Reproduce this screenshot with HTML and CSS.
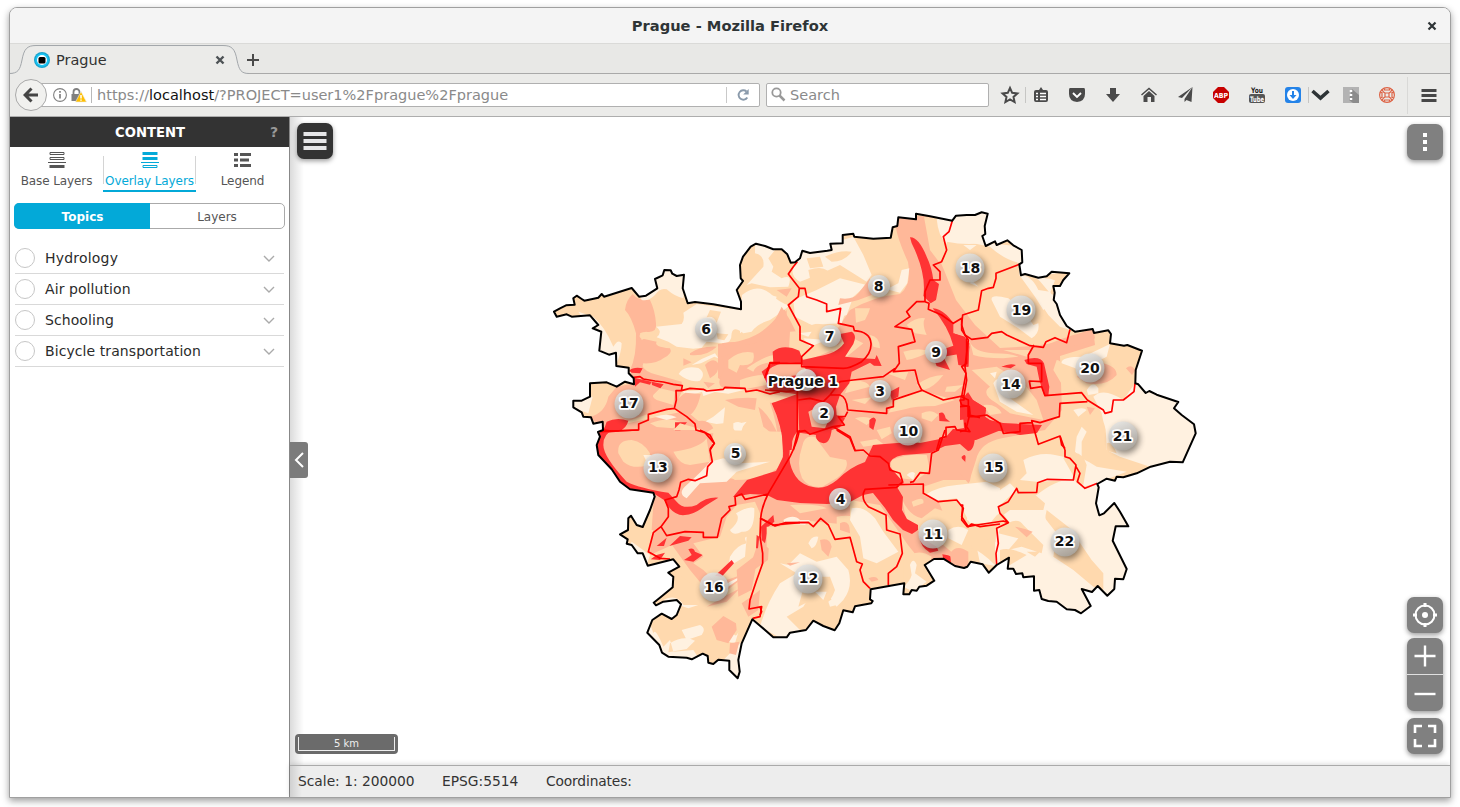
FILE: index.html
```html
<!DOCTYPE html>
<html lang="en">
<head>
<meta charset="utf-8">
<title>Prague</title>
<link rel="stylesheet" href="styles.css">
</head>
<body>
<div class="window">
  <header class="titlebar"><span class="title">Prague - Mozilla Firefox</span>
    <svg class="win-close" width="10" height="10" viewBox="0 0 10 10"><path d="M1.5 1.5L8.5 8.5M8.5 1.5L1.5 8.5" stroke="#2e3436" stroke-width="2.2"/></svg>
  </header>
  <div class="tabs">
    <svg class="tab-shape" width="240" height="31" viewBox="0 0 240 31"><path d="M0 30.500C9 30.500 11 27 13 17C15 7 18 3.500 27 3.500H214C223 3.500 226 7 228 17C230 27 232 30.500 240 30.500V31H0Z" fill="#ebebe9"/><path d="M0 30.500C9 30.500 11 27 13 17C15 6 18 2.500 27 2.500H214C223 2.500 226 6 228 17C230 27 232 30.500 240 30.500" fill="none" stroke="#a3a7ab"/></svg>
    <div class="tab">
      <svg width="16" height="16" viewBox="0 0 16 16"><circle cx="8" cy="8" r="8" fill="#1aa3cc"/><circle cx="8" cy="8" r="6.800" fill="#18c4f5"/><circle cx="8" cy="8" r="5" fill="#fff"/><rect x="4.500" y="5" width="7" height="6.500" rx="1.500"/></svg>
      <span class="tab-title">Prague</span>
      <svg width="10" height="10" viewBox="0 0 10 10"><path d="M1.500 1.500L8.500 8.500M8.500 1.500L1.500 8.500" stroke="#4d5255" stroke-width="2.400"/></svg>
    </div>
    <svg class="plus" width="12" height="12" viewBox="0 0 12 12"><path d="M6 0V12M0 6H12" stroke="#4a4a4a" stroke-width="2"/></svg>
  </div>
  <nav class="toolbar">
    <div class="back"><svg width="16" height="16" viewBox="0 0 16 16"><path d="M8.500 1.500L2 8L8.500 14.500M2.500 8H15" fill="none" stroke="#454545" stroke-width="3"/></svg></div>
    <div class="urlbar">
      <svg width="34" height="16" viewBox="0 0 34 16"><circle cx="7" cy="8" r="6.400" fill="none" stroke="#808080" stroke-width="1.100"/><path d="M7 7V11.500M7 4V5.700" stroke="#777" stroke-width="1.600"/><path d="M20.500 8V5a3 3 0 0 1 6 0v3" fill="none" stroke="#808080" stroke-width="1.800"/><path d="M18.500 7h10v7h-10z" fill="#808080"/><path d="M28 4.500L33.500 15H22.500Z" fill="#ffbf00" stroke="#ebebeb" stroke-width=".6"/><path d="M28 8v3.500M28 12.500v1.300" stroke="#fff" stroke-width="1.500"/></svg>
      <i class="url-sep"></i>
      <span class="url">https://<b>localhost</b>/?PROJECT=user1%2Fprague%2Fprague</span>
      <i class="reload-sep"></i>
      <svg class="reload" width="14" height="14" viewBox="0 0 14 14"><path d="M11.300 9.500A4.700 4.700 0 1 1 10.500 3.500" fill="none" stroke="#8a9aab" stroke-width="1.900"/><path d="M12.700 1V6.500H7.200Z" fill="#8a9aab"/></svg>
    </div>
    <div class="search"><svg width="16" height="16" viewBox="0 0 16 16"><circle cx="5.500" cy="5.500" r="4.200" fill="none" stroke="#999" stroke-width="1.800"/><path d="M8.500 8.500L13.500 13.500" stroke="#999" stroke-width="2.500"/></svg><span>Search</span></div>
    <svg class="tools" width="460" height="42" viewBox="990 74 460 42">
      <path d="M1010 88l2.200 4.800 5.200.6-3.900 3.500 1.100 5.200-4.600-2.600-4.600 2.600 1.100-5.200-3.900-3.500 5.200-.6z" fill="none" stroke="#4a4a4a" stroke-width="2"/>
      <path d="M1025.500 87v16M1308.500 87v16" stroke="#c6c6c4"/><path d="M1407.500 77v37" stroke="#d9d9d7"/>
      <path d="M1036 90h3l2-3 2 3h3q2 0 2 2v8q0 2-2 2h-10q-2 0-2-2v-8q0-2 2-2z" fill="#4a4a4a"/><path d="M1036 93.500h2M1040 93.500h6M1036 96.500h2M1040 96.500h6M1036 99.500h2M1040 99.500h6" stroke="#fff" stroke-width="1.300"/>
      <path d="M1070 88h14q1 0 1 2v4q0 7-8 8-8-1-8-8v-4q0-2 1-2z" fill="#4a4a4a"/><path d="M1073 93l4 4 4-4" fill="none" stroke="#fff" stroke-width="1.900"/>
      <path d="M1110 88h6v6h4l-7 8-7-8h4z" fill="#4a4a4a"/>
      <path d="M1141.500 95l7.500-6.500 7.500 6.500" fill="none" stroke="#4a4a4a" stroke-width="1.500"/><path d="M1143.500 96l5.500-5 5.500 5v6h-3.500v-5h-3.500v5h-4z" fill="#4a4a4a"/>
      <path d="M1192.500 87l-14.500 10 4 1zM1192.500 87l-8 12v3l2-2 5 2z" fill="#4a4a4a"/>
      <path d="M1218 87h6l5 5v6l-5 5h-6l-5-5v-6z" fill="#c70000"/><text x="1221" y="97.500" class="abp" textLength="14" lengthAdjust="spacingAndGlyphs">ABP</text>
      <text x="1257" y="93" class="you" textLength="12" lengthAdjust="spacingAndGlyphs">You</text><rect x="1249" y="94" width="16" height="9" rx="2" fill="#555"/><text x="1257" y="101.500" class="tube" textLength="14" lengthAdjust="spacingAndGlyphs">Tube</text>
      <rect x="1285" y="87" width="16" height="16" rx="3" fill="#2483e8"/><circle cx="1293" cy="95" r="6" fill="#fff"/><path d="M1292 91h2v4h2.500l-3.500 4-3.500-4h2.500z" fill="#2483e8"/>
      <path d="M1312.500 91l8 7 8-7" fill="none" stroke="#2e3436" stroke-width="3.600"/>
      <rect x="1343" y="87" width="16" height="16" fill="#b3b3b3"/><path d="M1352 89l7 6v8h-6l-4-3z" fill="#8c8c8c"/><path d="M1351 90v2M1351 94v2M1351 98v2" stroke="#fff" stroke-width="2.500"/>
      <g fill="none" stroke="#dd6345" stroke-width="1.200"><circle cx="1387" cy="95" r="7.400"/><path d="M1385 93h4v4h-4zM1382 89.500l1.500 2.500 1.500 1M1392 89.500l-1.500 2.500-1.500 1M1382 100.500l1.500-2.500 1.500-1M1392 100.500l-1.500-2.500-1.500-1M1384.500 88.500v1.500h5v-1.500M1384.500 101.500v-1.500h5v1.500M1380.500 92.500h1.500v5h-1.500M1393.500 92.500h-1.500v5h1.500"/></g>
      <path d="M1421.500 90.500h15M1421.500 95.500h15M1421.500 100.500h15" stroke="#474747" stroke-width="2.800"/>
    </svg>
  </nav>
  <main class="app">
    <aside class="sidebar">
      <div class="panel-head"><span>CONTENT</span><em>?</em></div>
      <div class="modes">
        <div class="mode"><svg width="20" height="16" viewBox="0 0 20 16"><path d="M3 .5h14v2H3zM3 5.500h14v2H3z" fill="none" stroke="#555"/><path d="M1 10.500h18" stroke="#555"/><path d="M2.500 13h15v3h-15z" fill="#555"/></svg><span>Base Layers</span></div>
        <div class="mode active"><svg width="20" height="16" viewBox="0 0 20 16"><path d="M2.500 0h15v3h-15zM2.500 5h15v3h-15z" fill="#03a9d8"/><path d="M1 10.500h18M3 13.500h14v2H3z" fill="none" stroke="#03a9d8"/></svg><span>Overlay Layers</span></div>
        <div class="mode"><svg width="20" height="16" viewBox="0 0 20 16"><path d="M1 2.500h4M7 2.500h11M1 8h4M7 8h9M1 13.500h4M7 13.500h11" stroke="#555" stroke-width="3"/></svg><span>Legend</span></div>
      </div>
      <div class="switch"><span class="on">Topics</span><span>Layers</span></div>
      <ul class="topics">
        <li><i></i><span>Hydrology</span><svg width="12" height="7" viewBox="0 0 12 7"><path d="M1 1l5 5 5-5" fill="none" stroke="#aaa" stroke-width="1.400"/></svg></li>
        <li><i></i><span>Air pollution</span><svg width="12" height="7" viewBox="0 0 12 7"><path d="M1 1l5 5 5-5" fill="none" stroke="#aaa" stroke-width="1.400"/></svg></li>
        <li><i></i><span>Schooling</span><svg width="12" height="7" viewBox="0 0 12 7"><path d="M1 1l5 5 5-5" fill="none" stroke="#aaa" stroke-width="1.400"/></svg></li>
        <li><i></i><span>Bicycle transportation</span><svg width="12" height="7" viewBox="0 0 12 7"><path d="M1 1l5 5 5-5" fill="none" stroke="#aaa" stroke-width="1.400"/></svg></li>
      </ul>
    </aside>
    <section class="stage">
      <div class="map">
        <svg class="city" width="1160" height="648" viewBox="290 117 1160 648">
          <defs>
            <path id="border" d="M554 311.700L560 308.300 566 305.300 574.700 304.700 573.300 298.300 576.700 295.700 581.700 299 584.300 300.700 598.300 297.700 601.700 294 604 296.700 631.700 288 639 296.700 646 295.700 657.300 288.300 655 279 662.700 275.300 664.300 270 670.700 270.300 672.300 273.700 676.700 276 684 274.700 682.700 288.300 687.700 303.300 695 302 713.300 304.300 741 309.300 741 301.700 736.700 290 743 281 740.700 278.300 740 265 743 256.700 750.700 246.700 756 243.700 765 246 773.300 249.300 781.700 249.300 787.300 254.300 790.700 262.700 795 262.300 800 258.300 802.300 250.700 810 253 827.300 250.700 831.700 250 830.300 243.700 842.700 243.300 842.700 235 853.300 233.700 854.300 236.700 873.300 238.700 890.700 237.700 892.700 227.300 897.300 226 898.300 217.300 916 219.300 916 213.700 930 216.300 952.300 220.700 956 215.700 966.700 215 975 215 981.700 212.300 987.700 213.700 984.700 226 985.300 234 982.300 236 985.700 246 995 241.300 996.700 245 1007.300 240.300 1013.300 245.300 1021.700 250 1022.300 262.300 1019.300 264.300 1021 275.300 1025 274 1038.300 277.700 1046.700 276.300 1051.700 271.700 1069.300 273.300 1063.300 280 1060 286 1053.300 286 1054.700 292.700 1053.700 300 1056.700 304 1060 315 1066.700 326 1075 331.700 1092.700 329 1094 333 1108.300 330.300 1111 334 1110 343.300 1124 345.700 1127.300 345 1142 350.700 1135.700 370 1135.300 383.300 1138.300 384.300 1145.700 393 1149.300 391 1156.700 394.700 1178.300 402 1174 408.300 1181.700 415 1194 424.300 1195.700 433.300 1182.700 462.300 1170 461.700 1150.700 466.700 1136.700 473.300 1123.300 477.300 1116.700 476.700 1115 480.700 1106.700 478.700 1097.300 484 1098.700 487.300 1096 503.300 1099.300 515.300 1104 513.300 1114.300 503 1120 511.700 1128.300 526.300 1115.700 526.300 1112.700 540.700 1126.700 569 1123.300 579.300 1115 578.700 1114.300 589 1107.300 595.700 1097.700 586 1092 592 1081.700 589 1090.700 606 1081 613.300 1075 610 1066.700 609.300 1056.700 601.700 1048.300 601 1041.700 599 1039.300 590 1034 590.700 1034 576.300 1023.300 577.300 1022.300 573.300 1016 574 1013.300 568.700 1007.700 568.700 1009 557.700 996.700 565 988.700 572.700 982.700 564.300 970.700 561.700 967.300 566.700 964 568 955 566 943.300 558.700 934 559 924.700 565 934.300 580.700 926.700 585.700 919.300 586.700 916.700 590.700 911.700 590 909.300 594.300 903.300 594.300 904.300 583.300 870.700 589.300 870 599.300 872.700 601 871.300 603.300 855 606.300 852.700 612.300 843.300 610.300 839.300 623.300 834.700 630.300 823.300 626 813.300 620.700 806 630 790 632.700 786.700 637.300 773.300 637.300 760 625.700 752.300 619.300 741.700 643.300 738.300 660 739.700 671.700 737.700 678.300 729.300 670 729.300 660.700 718.300 659.700 713.300 664 708.300 662.700 707.700 656 702.700 653.700 691.700 659.300 686.700 657.700 668.300 656.700 662 652.700 659.300 645 647.300 632.700 652.300 620 661.700 613.700 671.700 619 676.700 615 681 604.300 676.700 600 663.300 601.700 656 605.300 653.700 602.700 663.300 595 672.700 587.300 673.300 576.700 668.300 572.700 679.300 566.700 673.300 559.300 647.700 565.700 642.700 553.300 637.700 553.300 631.700 545 626.700 543.700 627.700 539.300 620 534.300 628 530 628.300 518.300 631 515.700 636.700 525 642.700 527 650 510 654.700 496.700 653.300 492.700 630 489.300 620 481.700 611.700 469.300 598.300 455 596.700 445 600 436.700 598 432 603 430 602.700 421.700 593.300 423.700 591 417.300 583.300 416.700 581.700 412.300 573.300 407.300 573.300 400.700 581.700 400.700 590 396.700 590 383.300 606.700 382.300 616.700 386.700 625 381.700 634 384.300 633.700 378.300 628.700 373.300 628.700 367.700 616.300 366 616 352.700 609 354.700 599.300 350.700 601.300 331.700 592.700 328.300 598.300 325 590 315.300 571.700 316.700 566.700 314.300 556.700 316.700Z"/>
            <clipPath id="inside"><use href="#border"/></clipPath>
            <linearGradient id="ball" x1=".2" y1="0" x2=".6" y2="1"><stop offset="0" stop-color="#e6e6e4"/><stop offset=".55" stop-color="#bfbdba"/><stop offset="1" stop-color="#a09c96"/></linearGradient>
          </defs>
          <g clip-path="url(#inside)">
            <path class="o" d="M540 200H1210V690H540Z"/>
            <path class="s" d="M718 344Q750 342 766 328Q778 318 784 306L790 330 802 350 830 340 850 310Q875 296 900 294Q912 285 908 262Q898 240 896 228L900 216 932 216Q930 240 944 270L956 300 975 325 1000 348 1034 346 1060 342 1093 328 1095 345 1060 356 1062 410 1045 430 1003 438Q980 442 976 460L968 485 950 490 938 500 950 530 966 550 968 570 946 560 924 565 908 545 880 505 850 500 850 525 800 520 770 530 768 560 740 580 715 600 690 570 672 545 650 555 654 494 600 465 596 430 690 410 800 400 730 385 718 378Z"/>
            <path class="o" d="M690 392Q730 388 766 394Q774 410 778 436Q786 452 780 466Q765 480 735 480L712 466 712 440 702 424 690 414Z"/>
            <!-- north-west -->
            <g transform="translate(540 200) scale(.33333)">
              <path class="s" d="M255 330Q258 300 278 282Q292 302 330 300Q345 330 348 370Q352 400 318 395Q290 402 302 415L350 425Q340 440 390 445Q400 460 370 475Q350 492 310 490Q300 505 335 520L425 545 425 575 405 620 330 640 190 690 150 650Q195 640 205 590L230 560 283 550 270 510Q290 470 288 400Q275 350 255 330Z"/>
              <path class="c" d="M352 265L340 235 375 205 435 220 430 295Q405 290 380 268Q360 262 345 285Q325 305 305 300L300 288Z"/>
              <path class="c" d="M348 380L425 372Q435 360 430 338L470 312 603 330 606 285Q650 248 690 280Q720 310 745 315Q760 312 690 360Q650 372 635 395L610 400Q580 375 575 400Q575 430 552 430L500 425 485 443 460 446 410 440 385 425 350 412Q370 395 348 380Z"/>
              <path class="o" d="M510 330L543 335 530 368Q520 345 500 352ZM530 400l35 3-12 18-20-4z"/>
              <path class="c" d="M115 335L160 350Q195 380 220 440 235 415 245 430 245 460 225 500L200 470 165 452 165 400 150 385Z"/>
              <path class="s" d="M545 430Q600 420 620 435L680 420Q700 370 740 330V582L650 568 560 566Q525 560 545 525Q560 500 545 470L580 460 560 445Z"/>
              <path class="o" d="M565 480Q600 450 640 458Q650 500 600 495L590 518 565 505ZM620 505Q700 450 720 470V486Q650 485 640 515ZM600 540h80q20 12-30 18z"/>
              <path class="s" d="M495 495Q520 470 535 490 540 520 510 535ZM450 460Q480 438 530 440 500 470 450 465ZM430 475l25 12-25 10zM490 545l35 5-20 14z"/>
              <path class="c" d="M416 522Q430 495 475 504 500 520 480 542 450 550 416 522ZM455 495l30-18 40-17 10 15-12-5-40 20zM430 574l80-5-55 15-18 20zM485 572l70-5 60 2-50 12-40-5-35 12zM495 665l25-15 35-28-5 48-20 2zM580 670q20-10 30 5l-12 40q-8-10-18-30z"/>
              <path class="o" d="M155 560L225 552Q195 590 180 610 165 640 150 650L95 620ZM360 565L405 575 400 615 350 600Q330 590 345 580ZM300 400q20-10 25 10l-20 10zM330 670q50-20 90-5l-20 20-50-4zM220 735q60-35 100 0l-20 20h-90z"/>
              <path class="c" d="M95 590L158 590 145 640 100 625ZM345 650q40-12 65 2l-30 8z"/>
              <path class="s" d="M410 600L435 578 482 582Q470 640 440 650L405 625ZM470 665q35-10 50 20l-25 15zM555 600q60-10 95-5l-5 35-50-10zM655 620q40 30 65 100l-50-40z"/>
              <path class="r" d="M268 512Q280 500 308 505L300 520 275 518ZM282 533L335 545 330 554 300 547 285 560ZM335 545l36 8-10 12-25-10zM188 700L200 665Q230 650 265 662 260 685 235 695ZM405 667l36 0-20 24h-16z"/>
            </g>
            <!-- north -->
            <g transform="translate(740 200) scale(.33333)">
              <path class="c" d="M45 130L105 150 85 175 100 200 95 215 125 235Q160 220 145 260L90 262 35 250 20 255 70 200Q75 165 45 160ZM0 300Q60 270 110 290L100 320 0 400ZM190 150L260 155 275 130 340 110 370 165 395 225 380 245 300 195 245 220 180 245Q150 230 160 200ZM160 300L230 270 300 235 380 255 340 290 320 345 215 375 165 350ZM440 268L475 250 485 210 508 205 502 250 480 278Z"/>
              <path class="o" d="M200 175l40-5 10 30-40 5zM205 210q60-20 70 25l-60 25zM255 170q40-20 80-15-20 30-60 30zM180 370q70 15 100-5l-15 50-70 40-25-30z"/>
              <path class="s" d="M300 295q40 5 55-15l35-45 5 50-40 15-60 15zM125 320l25 40 30 60V450H60zM110 270l45-5-15 25z"/>
              <path class="o" d="M150 395l65-5q50 15 75 5l0 50-70 30-75 5zM345 325L390 325 385 340 375 360 348 368zM390 405q30 5 30 40l-20-5zM270 450l60-40 40 20-50 40zM260 430q50 10 65 30z"/>
              <path class="c" d="M235 300q25 30 80 40l-10 30q-60 5-100 0l15-30-30-5zM175 400l40-5-10 15zM190 415l70 5-50 20z"/>
              <path class="o" d="M552 50L600 56 600 130 620 150 600 190 570 150Z"/>
              <path class="c" d="M590 56h50l-20 75q-25-20-30-75z"/>
              <path class="c" d="M635 60L650 45H720V130Q670 135 620 125Z"/>
              <path class="o" d="M500 375q30-25 55-20-10 15 5 50l-35-5zM490 455q50-15 80 0-40 20-70 25zM440 520l65-5-10 25zM530 555q40-30 80-30-30 40-60 45zM620 560l50-5-25 20-30 0zM465 600q40-25 90-25l90 25-60 18q-60 0-90 10l-50 10zM330 540q50 0 60 20l-75 20zM335 600l60-8-20 20zM545 640q30-15 50 5l-20 20-30-10zM345 655q35-10 55 5l-20 15zM410 690l40-10 5 20-30 18zM70 525q-30 0-70 15v30l80-15zM360 725l50-8 20 15-60 8z"/>
              <path class="c" d="M505 720q30-5 40-18l-5 25zM0 670l20-5-20 25z"/>
              <path class="r" d="M98 455Q130 430 178 452L188 480 230 470Q290 462 312 430L300 402 335 395Q352 405 340 432L315 470 365 475 405 477 410 465 425 498 402 497 390 488 335 515 328 550 300 585 288 620 290 645 315 655 300 682 275 690Q270 730 250 730 225 725 228 705L178 698 174 600 162 650 155 750 130 750Q128 680 95 610L170 583 90 570 65 515 100 488Z"/>
              <path class="s" d="M85 510Q120 480 185 492L200 510 180 525 85 535ZM205 635q45-25 65 15l-15 35-40-5z"/>
              <path class="r" d="M510 112Q535 110 560 170 575 200 580 240L597 252 588 300 572 310 550 288Q560 220 515 130ZM578 325Q620 328 655 395L688 430 685 500 665 500 658 462 610 470 630 510 590 498 575 460 640 437Q625 380 578 325ZM450 575L478 560 475 590 455 600ZM388 660q15-15 20 0l-8 30-12-8zM597 640q15-10 20 15l13 10-32-2z"/>
            </g>
            <!-- north-east and east -->
            <g transform="translate(960 200) scale(.33333)">
              <path class="c" d="M-15 30H90V130L187 140V190Q140 185 90 140L40 130-10 128ZM178 190L240 220 295 215 270 280 245 250Q230 225 178 225ZM235 275L285 285 330 390 300 380 265 345 235 300ZM95 300Q90 280 145 295L190 330 220 375 235 370Q240 400 215 415L175 385 120 350Z"/>
              <path class="c" d="M178 225Q215 225 235 270L270 275 285 300 250 330 225 290ZM305 490Q300 470 370 470L450 432 440 470 360 510ZM380 570q20-30 35-5l0 15-30 5zM400 590Q430 560 490 600L525 550 560 575 720 600V760H520Q440 740 425 640Z"/>
              <path class="o" d="M255 225L325 215 300 258Q290 235 255 235ZM30 425q10 30 70 35 50 0 75 10l-45 5q-60 0-90-10zM35 510l75-10 80 50 40 50 20 60-100-20-40-30q-50-30-20-50zM130 450l80 0-10 20zM290 480q15 0 15 20l15 30 80 10-20 30-70-10-30-50z"/>
              <path class="s" d="M225 455Q260 430 340 405L400 390 405 415Q360 440 320 440 240 465 225 455ZM430 490Q470 500 470 525 440 560 380 550L350 530ZM498 505q15-15 28 5l-10 15zM-20 400L30 418 20 400-20 320ZM380 620l25 5-15 20z"/>
              <path class="c" d="M100 550q10-20 25-10l25 55 70 50-50-10-50-30zM30 250l25 10-20-20zM10 135l40 0-20 15zM90 520l20-5-5 20z"/>
              <path class="o" d="M70 615q40-5 55 25l-35 5z"/>
              <path class="r" d="M193 480Q240 465 252 490L268 560 265 588 253 588 238 540 230 500 200 492ZM124 500Q150 488 168 495L152 505ZM0 590L30 595 78 625 70 650 0 660ZM-20 400L15 410 28 440 25 500-5 495Z"/>
            </g>
            <!-- west and south-west -->
            <g transform="translate(560 430) scale(.33333)">
              <path class="s" d="M130 10H460L440 135 360 160 340 200 200 160 130 70Z"/>
              <path class="o" d="M175 70Q170 30 215 30 250 35 270 70L265 105Q220 120 190 95ZM340 65q80-10 100-40l10 70-60 10q-30 0-50-40zM480 0L665 5Q670 90 660 95 600 150 500 145L430 135 490 60 470 30ZM360 -20L430 0H340Z"/>
              <path class="c" d="M380 165Q430 120 450 95L490 85 540 100 630 95 530 125 500 155 420 160 380 205Q350 190 380 165ZM250 75l25 0-15 20z"/>
              <path class="o" d="M500 260L530 225 585 215 600 250 600 320 580 380 560 430 470 460 430 420 400 400 430 380 400 340 480 320ZM340 420L430 490 560 470 540 560 570 560V780H240V560L340 460ZM240 300l40 0-20 80-50-30-30-30 40-70z"/>
              <path class="c" d="M528 250Q570 225 583 235 585 310 545 305 520 320 510 300 545 270 528 250ZM510 380q20-35 50-40-10-20 0-20l-5 60-50 30zM310 650q-25-60-30-40L270 580 240 620 310 690H420L400 660 340 665 330 630zM330 640q40-25 75-8l-25 25-55 10zM365 600L420 585Q440 595 425 615L380 630ZM310 510q40-20 60 15l45 0-30 10-30-10zM430 480h40l40-25 60-30-80 55zM490 690L550 630 560 680 530 760ZM520 610q10 20 20-20l-15 50-20-5zM215 335l55 40-10 30-50-60z"/>
              <path class="s" d="M455 590L490 558 528 580 530 600 505 640 470 630ZM510 640l28-5-10 40-20-5zM545 520q30-20 55-40l-5 60-30 20zM440 530q50-30 100-55l-40 40zM530 420l65-50-20 110-40 20z"/>
              <path class="r" d="M122 -10L108 50Q130 130 210 180L280 190 312 210Q340 260 375 255 400 255 435 228L475 203Q440 200 410 225 370 240 350 215L325 188Q240 175 200 155 130 80 130 45 130 10 160 0ZM328 348L360 318 395 322 385 332ZM385 358Q400 350 405 365L428 375 400 395 372 390 395 375ZM272 388L290 375 315 368 300 390ZM290 348l30-25-8 25zM465 437L515 390 522 400 485 440ZM603 290L640 255 643 275 625 290 615 340 605 330ZM590 315l8 5-4 35-6 0z"/>
            </g>
            <!-- south -->
            <g transform="translate(760 430) scale(.33333)">
              <path class="o" d="M20 290L150 290 180 320 260 330 290 400 330 470 250 560 130 620 30 610 20 400Q50 370 20 350ZM90 225q80-5 110 10l-80 15zM230 260q60-10 90 20l60 60 40 40-40 90-80-30-20-110-50 20z"/>
              <path class="c" d="M120 370L170 395 230 380 265 420Q280 470 250 510L230 530 200 490 160 480 130 530 80 560 120 600 80 635 0 590Q20 520 60 460L110 430 60 400 85 405ZM275 235Q310 225 345 265L370 305 415 365 350 400 310 385 300 320 270 270ZM70 270q30-20 50 0l30 0-15 15-60-5zM145 340q10-25 30-20-5 30-20 35z"/>
              <path class="o" d="M140 440h70l15 40q-20 60-50 20l-60 30z"/>
              <path class="c" d="M165 485l35 0-10 25zM205 515q15-15 25 10l-20 5z"/>
              <path class="s" d="M180 330q30-10 35 20l-10 30-20-20zM80 400l40-3-30 10zM325 445q25-10 30 5l-20 5zM240 280q30-15 30 30l-30-10z"/>
              <path class="o" d="M395 90Q440 70 500 75L510 120 470 150 420 145Q385 120 395 90ZM455 215q40-20 35 5l-30 10zM425 205q20 50 60 60l40-30 60 20 50 40 0 70-50 10-70-60-70-20zM430 390q40-40 85-10l-15 70-70 30zM665 75l55-30v255l-90-20-20-60-80-5-40-20 0-25 60-20 80 0z"/>
              <path class="c" d="M495 195Q530 170 590 165L680 155 720 175 715 250 690 280 630 280 590 205 530 212ZM440 135q15-15 25-5l-5 20zM565 300q30-20 60 0l-20 45-40-20zM450 405q10-25 20 0l-5 25 35 25-40 30-30-15q20-15 25-35zM650 350q60-30 70 0v60l-60-10z"/>
              <path class="r" d="M478 318L530 350 535 362 510 368Q480 350 478 318ZM547 373Q580 375 620 412L585 415 550 388ZM605 80q10-10 12 0l-2 25-10-5z"/>
            </g>
            <!-- south-east -->
            <g transform="translate(960 400) scale(.33333)">
              <path class="c" d="M190 180Q240 155 285 165L310 170 345 205 340 240 230 245 180 240 200 220ZM45 300q40-15 75-30l30-20 20 20-50 70-60 30-40-10zM430 20Q440 110 440 150L480 170 570 200 720 180V0H440ZM340 30q30-10 40 0l-25 20zM350 110l15-30 15 15-15 30 0 50-20-20z"/>
              <path class="c" d="M115 320L230 285Q300 230 345 240L350 250 375 265 420 240 520 380 510 650H90L110 380 150 370ZM310 170Q350 160 410 200L500 215 410 250 370 260Z"/>
              <path class="o" d="M115 320L170 270 220 280 255 310 250 330 150 330 130 345ZM260 330L330 385 395 480 430 520V570L400 560 340 510 280 470 290 400 255 355ZM120 385q50-40 70-10l60 60-5 25-60-20-40 10 30-35-60-15zM310 175q50-40 70 20l-10 60-20-10zM120 450q30-10 80 15l-50 30-30-10zM440 130q15-10 30 30l-30-8zM200 455l40 0-15 15zM35 435q40-20 70-20v80q-40-40-70-50z"/>
              <path class="s" d="M165 380Q190 385 218 395L200 412ZM-30 460q20-30 55-5v50h-50zM0 170l20 20q20 50 5 60L0 220Z"/>
              <path class="c" d="M200 350l20-5-8 20zM235 340l20 5 5 30-25-10zM160 350l35-5-10 20z"/>
            </g>
            <path class="r" d="M772 403Q784 425 783 457L776 471 747 480 733 497 750 494 767 495 777 500 800 503 827 504 850 502 863 495 873 493 885 508 893 520 903 530 912 534 918 530 918 525 907 519 902 510 903 497 897 487 904 483 890 467Q888 458 903 455L930 453 945 446 960 444 968 451Q974 451 975 437 980 428 1000 431L1020 435 1037 433 1042 425 1003 423 985 419 986 410 970 400 967 393 962 400 969 413 970 430 953 429 945 438 920 443 897 443 873 445 865 462Q850 467 837 480 825 490 813 487 795 484 790 463 787 445 798 430V400Z"/>
            <path class="r" d="M962 402L968 392 973 400 986 408 984 416 993 422 1006 428 976 440 952 440 952 430 964 428Z"/>
            <path class="o" d="M802 447Q804 434 815 437L830 457 846 460Q850 468 837 478L822 487Q808 488 802 478 796 464 802 447Z"/>
          </g>
          <g class="roads">
            <g transform="translate(540 200) scale(.33333)">
              <path d="M281 532L300 530 310 537 345 543 370 546 400 553 427 557 424 572 450 565 490 568 500 573 550 568 555 562 615 565 618 575 650 570 690 582 720 575M424 572L408 572 409 600 403 625 380 628 325 643 325 660 296 672 296 690 215 693 190 690M403 625L440 650 465 672 468 690 495 698 523 730 510 747M720 488H690L685 510 675 530"/>
            </g>
            <g transform="translate(740 200) scale(.33333)">
              <path d="M172 185L160 200 145 222 178 265 195 265 200 290 230 300 260 312 260 335 302 325 295 370 340 380 343 392Q390 395 393 430 395 460 365 485 330 505 310 505L185 500 185 470 220 437 180 420 180 380 145 315 175 290 178 265M185 490H90L82 510 75 535M75 570L140 575 172 570V700L160 750M175 600L210 595 250 605 270 585 300 585Q320 590 323 630L440 640 440 625 460 620 460 600 490 590 550 570M323 635L315 650 295 650 313 675 280 680 210 703 195 692 175 695M280 680L330 710 345 750M270 585L300 545 340 540 430 530 465 505M637 62L627 95 610 110 620 150 605 185 580 195 600 215 600 240 570 240 555 275 555 305 530 305 500 335 510 350 465 380 515 388 525 425 475 440 478 490 460 515 525 510 535 550 545 570 610 600 672 587M555 305L567 310 565 328 605 345 640 370 665 355 665 390 685 420 675 500 680 540 672 587 672 600 660 600 665 615 688 620 690 640 680 680 690 695 650 690 645 680 618 682 618 710 600 715 590 750M688 645L720 653"/>
            </g>
            <g transform="translate(960 200) scale(.33333)">
              <path d="M178 193L108 220 108 235 100 262 85 265 65 272 55 330 8 345 5 375 15 405 35 418 83 412 95 400 125 395 140 405 210 437 250 442 258 425 285 413 320 428 330 388M222 435L205 465 205 490 245 490 245 545 208 543 212 565 245 560 255 587 365 578 382 600 430 630 435 640 455 635 460 600 490 600 522 575 525 550M382 605L300 610 298 650 240 668 215 662 235 733 300 708 305 735 315 745M20 415L20 490 5 500 18 520 5 590 25 600 25 650 45 650 80 645 120 670 130 700 180 695 180 670 215 668"/>
            </g>
            <g transform="translate(560 430) scale(.33333)">
              <path d="M420 0L450 15 463 40 450 60 457 95 443 110 440 137 405 152 385 148 362 157 357 180 350 200 315 210 325 235 325 260 303 290 320 317 375 305 430 307 430 322 472 322 485 265 510 240 507 230 527 225 525 200 545 192 555 208 625 192M303 290L280 308 265 365 300 385 330 387M718 0Q715 30 690 80L625 190Q605 230 602 265L600 320 608 370 608 400 590 450 570 510 567 537 605 530 600 560 578 565M602 265L640 285 720 278M122 5L235 0"/>
            </g>
            <g transform="translate(760 430) scale(.33333)">
              <path d="M0 265L45 288 75 278 145 277 160 290 182 265 205 285 225 328 270 322 275 340 290 395 307 402 300 420 310 455 330 475M230 0L270 25 285 62 310 60 330 78 360 80 385 100 390 120 420 130 428 155 410 172 315 178Q300 205 325 230L378 255 380 300 420 312 427 370 410 410 385 430 385 465M385 165L490 162 490 190 535 215 590 210 610 235 605 260 625 290 635 282 660 290 720 282M450 157L460 155 480 128 508 130 515 70 535 60 555 0M0 530L5 545 0 555"/>
            </g>
            <g transform="translate(960 400) scale(.33333)">
              <path d="M315 150V170L330 175 348 195 340 240 262 238 233 248 230 277 175 278 170 265 145 305 115 320 120 340 145 368 110 385 115 430 108 460 110 495M348 200L360 220 352 245 375 265 412 250M145 368L130 363 50 375 22 380 5 360 8 315 0 315M300 108L315 150M0 20L25 18 25 50M0 95L18 90 15 68"/>
            </g>
          </g>
          <use href="#border" class="outline"/>
          <ellipse cx="800" cy="387" rx="36" ry="7" class="smudge"/>
          <g class="pins"><circle cx="706" cy="329" r="11"/><circle cx="879" cy="286" r="11"/><circle cx="830" cy="336" r="11"/><circle cx="936" cy="352" r="11"/><circle cx="880" cy="391" r="11"/><circle cx="823" cy="413" r="11"/><circle cx="735" cy="454" r="11"/><circle cx="840" cy="499" r="11"/><circle cx="806" cy="380" r="11"/><circle cx="970" cy="268" r="14.500"/><circle cx="1021" cy="310" r="14.500"/><circle cx="1090" cy="368" r="14.500"/><circle cx="1011" cy="384" r="14.500"/><circle cx="629" cy="404" r="14.500"/><circle cx="908" cy="431" r="14.500"/><circle cx="1123" cy="436" r="14.500"/><circle cx="658" cy="468" r="14.500"/><circle cx="993" cy="468" r="14.500"/><circle cx="933" cy="534" r="14.500"/><circle cx="1065" cy="542" r="14.500"/><circle cx="714" cy="587" r="14.500"/><circle cx="808" cy="579" r="14.500"/></g>
          <g class="labels"><text x="706" y="333.500">6</text><text x="878.500" y="290.500">8</text><text x="829.500" y="340.500">7</text><text x="936" y="356.500">9</text><text x="880" y="396">3</text><text x="824" y="417.500">2</text><text x="735.500" y="458">5</text><text x="840.500" y="504">4</text><text x="803" y="385.500">Prague 1</text><text x="970.500" y="272.500">18</text><text x="1021.500" y="314.500">19</text><text x="1090" y="372.500">20</text><text x="1011" y="389">14</text><text x="629" y="408">17</text><text x="908.500" y="435.500">10</text><text x="1122.500" y="441">21</text><text x="658" y="472">13</text><text x="994" y="472">15</text><text x="933.500" y="538.500">11</text><text x="1064.500" y="546">22</text><text x="714" y="591.500">16</text><text x="808.500" y="583">12</text></g>
        </svg>
        <div class="btn menu"><svg width="24" height="20" viewBox="0 0 24 20"><path d="M.5 3h23M.5 10h23M.5 17h23" stroke="#e6e6e8" stroke-width="4"/></svg></div>
        <div class="collapse"><svg width="10" height="16" viewBox="0 0 10 16"><path d="M9 1L2 8l7 7" fill="none" stroke="#fff" stroke-width="2"/></svg></div>
        <div class="btn more"><svg width="4" height="18" viewBox="0 0 4 18"><path d="M0 0h4v4H0zM0 7h4v4H0zM0 14h4v4H0z" fill="#fff"/></svg></div>
        <div class="controls">
          <div class="btn"><svg width="24" height="24" viewBox="0 0 24 24"><circle cx="12" cy="12" r="9.500" fill="none" stroke="#fff" stroke-width="2"/><circle cx="12" cy="12" r="3" fill="#fff"/><path d="M12 0v4M12 20v4M0 12h4M20 12h4" stroke="#fff" stroke-width="3"/></svg></div>
          <div class="zoom"><div><svg width="22" height="22" viewBox="0 0 22 22"><path d="M11 .5v21M.5 11h21" stroke="#fff" stroke-width="2.400"/></svg></div><div><svg width="22" height="22" viewBox="0 0 22 22"><path d="M.5 11h21" stroke="#fff" stroke-width="2.400"/></svg></div></div>
          <div class="btn"><svg width="24" height="24" viewBox="0 0 24 24"><path d="M9 2H2V9M15 2h7V9M9 22H2V15M15 22h7V15" fill="none" stroke="#fff" stroke-width="2.600"/></svg></div>
        </div>
        <div class="scale"><span>5 km</span></div>
      </div>
      <footer class="status"><span class="s1">Scale: 1: 200000</span><span class="s2">EPSG:5514</span><span class="s3">Coordinates:</span></footer>
    </section>
  </main>
</div>
</body>
</html>
```
FILE: styles.css
```css
* { box-sizing: border-box; }
body { margin: 0; width: 1460px; height: 807px; overflow: hidden; background: #fff; font-family: "DejaVu Sans", sans-serif; color: #333; }
svg { display: block; flex: none; }
.window { width: 1442px; height: 791px; margin: 7px 9px; border: 1px solid #a0a0a0; border-radius: 8px 8px 0 0; box-shadow: 0 3px 7px rgba(0,0,0,.38); overflow: hidden; display: flex; flex-direction: column; background: #fff; }
.titlebar { height: 36px; background: #f4f4f4; border-bottom: 1px solid #dadad8; position: relative; display: flex; align-items: center; justify-content: center; font-weight: bold; font-size: 14.67px; color: #2e3436; }
.win-close { position: absolute; right: 13px; top: 13px; }
.tabs { height: 30px; background: #e8e8e6; border-bottom: 1px solid #a9a9a9; position: relative; display: flex; align-items: center; }
.tab-shape { position: absolute; left: -1px; top: -1px; }
.tab { position: relative; display: flex; align-items: center; width: 191px; margin-left: 24px; margin-top: 3px; font-size: 14.5px; }
.tab-title { flex: 1; margin-left: 6px; line-height: 17px; }
.plus { margin-left: 22px; margin-top: 3px; }
.toolbar { height: 43px; background: #ebebe9; border-bottom: 1px solid #adadad; display: flex; align-items: center; flex: none; font-size: 14.53px; color: #8a8a8a; }
.back { position: relative; z-index: 2; margin-left: 5px; width: 32px; height: 32px; border: 1px solid #a9a9a9; border-radius: 50%; background: #f1f1ef; display: flex; align-items: center; justify-content: center; flex: none; }
.urlbar { margin-left: -7px; padding-left: 12px; width: 720px; height: 24px; background: #fff; border: 1px solid #b0b0b0; border-radius: 2px; display: flex; align-items: center; flex: none; }
.url-sep { width: 1px; height: 16px; background: #b9b9b9; margin: 0 5px 0 4px; }
.url { flex: 1; white-space: nowrap; line-height: 16px; }
.url b { font-weight: normal; color: #111; }
.reload-sep { width: 1px; height: 16px; background: #c9c9c9; }
.reload { margin: 0 9px; }
.search { width: 223px; height: 24px; margin-left: 6px; background: #fff; border: 1px solid #b0b0b0; border-radius: 2px; display: flex; align-items: center; padding-left: 4px; gap: 3px; flex: none; }
.search span { line-height: 16px; }
.tools { margin-left: 1px; }
.abp { font: bold 7px "DejaVu Sans", sans-serif; fill: #fff; text-anchor: middle; }
.you { font: bold 7.5px "DejaVu Sans", sans-serif; fill: #222; text-anchor: middle; }
.tube { font: bold 7.5px "DejaVu Sans", sans-serif; fill: #fff; text-anchor: middle; }
.app { flex: 1; display: flex; min-height: 0; }
.sidebar { width: 280px; border-right: 1px solid #888; background: #fff; flex: none; }
.panel-head { height: 30px; background: #333; color: #fff; font-weight: bold; font-size: 13.2px; display: flex; align-items: center; position: relative; }
.panel-head span { flex: 1; text-align: center; padding-left: 1px; }
.panel-head em { position: absolute; right: 11px; font-style: normal; color: #999; font-size: 14px; }
.modes { display: flex; height: 45px; }
.mode { width: 93px; display: flex; flex-direction: column; align-items: center; padding-top: 5px; font-size: 12px; color: #555; position: relative; white-space: nowrap; }
.mode span { margin-top: 6px; line-height: 15px; letter-spacing: -.1px; }
.mode.active { color: #03a9d8; border-bottom: 2px solid #03a9d8; background: linear-gradient(#d4d4d4,#d4d4d4) right 9px/1px 28px no-repeat, linear-gradient(#d4d4d4,#d4d4d4) left 9px/1px 28px no-repeat; }
.switch { margin: 11px 4px 0; height: 26px; border: 1px solid #aaa; border-radius: 5px; display: flex; font-size: 12px; line-height: 26px; text-align: center; color: #555; }
.switch span { flex: 1; }
.switch .on { background: #03a9d8; color: #fff; font-weight: bold; margin: -1px 0 -1px -1px; line-height: 28px; height: 26px; border-radius: 5px 0 0 5px; padding-left: 1px; flex: 0 0 136px; }
.topics { list-style: none; margin: 14px 5px 0; padding: 0; font-size: 14px; color: #2b2b2b; }
.topics li { height: 31px; border-bottom: 1px solid #d9d9d9; display: flex; align-items: center; letter-spacing: .08px; }
.topics i { width: 20px; height: 20px; border: 1px solid #c6c6c6; border-radius: 50%; margin-right: 10px; }
.topics span { flex: 1; }
.topics li:first-child span { letter-spacing: .2px; }
.topics svg { margin-right: 9px; }
.stage { flex: 1; display: flex; flex-direction: column; min-width: 0; }
.map { flex: 1; position: relative; background: linear-gradient(90deg, rgba(0,0,0,.14), rgba(0,0,0,0) 14px), #fff; }
.city { position: absolute; left: 0; top: 0; }
.c { fill: #fff1e0; } .o { fill: #ffd9ae; } .s { fill: #ffb899; } .r { fill: #ff3334; }
.outline { fill: none; stroke: #000; stroke-width: 2; stroke-linejoin: round; }
.roads { fill: none; stroke: #f00; stroke-width: 5; stroke-linejoin: round; }
.pins circle { fill: url(#ball); filter: drop-shadow(2px 3px 3px rgba(0,0,0,.5)); opacity: .9; }
.smudge { fill: rgba(50,20,10,.65); filter: blur(4px); }
.labels { font: bold 14px "DejaVu Sans", sans-serif; fill: #111; stroke: #fff; stroke-width: 3.6px; paint-order: stroke; stroke-linejoin: round; text-anchor: middle; }
.btn { width: 36px; height: 36px; border-radius: 7px; background: #808080; display: flex; align-items: center; justify-content: center; box-shadow: 0 2px 5px rgba(0,0,0,.4); }
.menu { position: absolute; left: 7px; top: 6px; background: #333; }
.more { position: absolute; right: 7px; top: 7px; }
.collapse { position: absolute; left: 0; top: 325px; width: 18px; height: 36px; background: #7b7b7b; border-radius: 0 3px 3px 0; display: flex; align-items: center; justify-content: center; }
.controls { position: absolute; right: 7px; top: 480px; display: flex; flex-direction: column; gap: 5px; }
.zoom { height: 73px; border-radius: 7px; background: #808080; box-shadow: 0 2px 5px rgba(0,0,0,.4); margin-bottom: 2px; }
.zoom div { height: 37px; display: flex; align-items: center; justify-content: center; }
.zoom div:first-child { border-bottom: 1px solid #e0e0e0; }
.scale { position: absolute; left: 5px; top: 617px; width: 103px; height: 20px; background: #6b6b6b; border-radius: 4px; padding: 3px; }
.scale span { display: block; height: 14px; border: 1px solid #eee; border-top: 0; color: #eee; font-size: 10px; line-height: 13px; text-align: center; }
.status { height: 32px; background: linear-gradient(90deg, rgba(0,0,0,.12), rgba(0,0,0,0) 12px), #ededed; border-top: 1px solid #aaa; box-shadow: 0 -1px 5px rgba(0,0,0,.15); display: flex; align-items: center; padding: 0 0 2px 8px; font-size: 13.8px; color: #333; flex: none; z-index: 1; }
.s1 { width: 144px; } .s2 { width: 104px; } .s3 { letter-spacing: -.15px; }
```
